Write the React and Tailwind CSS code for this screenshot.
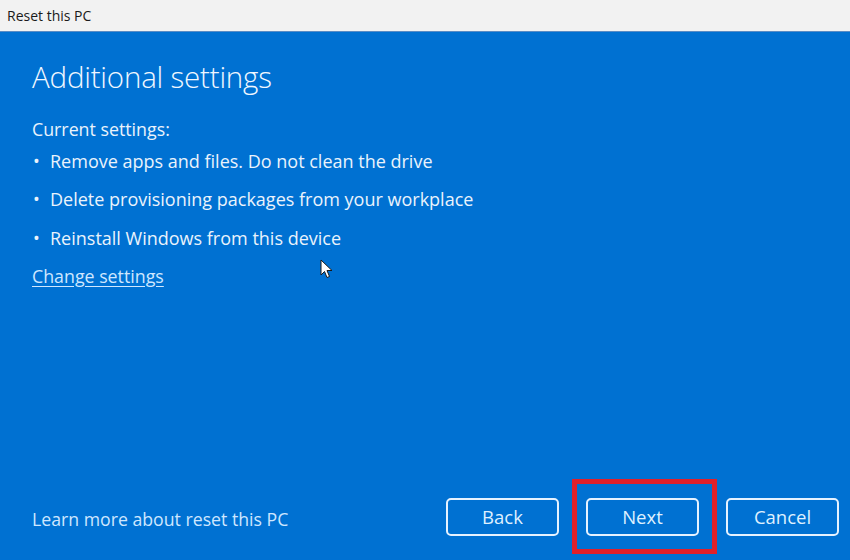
import React from "react";

export default function App() {
  const font = { fontFamily: '"Open Sans", "Noto Sans", sans-serif' };
  return (
    <div className="w-[850px] h-[560px] flex flex-col overflow-hidden" style={font}>
      <div className="h-[32px] bg-[#f2f2f2] border-b border-[#5a8cc4] flex items-center px-[7px]">
        <span className="text-[14px] text-[#1a1a1a]">Reset this PC</span>
      </div>
      <div className="relative flex-1 bg-[#0071d2] flex flex-col text-[#eaf3fc]">
        <div className="px-[32px] pt-[27px] flex flex-col">
          <h1 className="text-[29.5px] font-light leading-[36px] tracking-[-0.2px] text-[#f0f7ff]">Additional settings</h1>
          <p className="mt-[22px] text-[17.8px] leading-[24px]">Current settings:</p>
          <ul className="flex flex-col gap-[14.5px] mt-[7.5px] text-[18px] leading-[24px]">
            <li className="flex items-center">
              <span className="w-[18px] pl-[1px]">•</span>
              <span>Remove apps and files. Do not clean the drive</span>
            </li>
            <li className="flex items-center">
              <span className="w-[18px] pl-[1px]">•</span>
              <span>Delete provisioning packages from your workplace</span>
            </li>
            <li className="flex items-center">
              <span className="w-[18px] pl-[1px]">•</span>
              <span>Reinstall Windows from this device</span>
            </li>
          </ul>
          <a className="mt-[14px] text-[17.8px] leading-[24px] underline underline-offset-[3px] text-[#cfe7ff] w-fit">Change settings</a>
        </div>
        <div className="mt-auto flex items-center pl-[32px] pr-[11px] pb-[24px]">
          <span className="text-[17.7px] text-[#cfe7ff] translate-y-[2px]">Learn more about reset this PC</span>
          <div className="ml-auto flex items-center gap-[27px]">
            <button className="w-[113px] h-[38px] rounded-[5px] border-2 border-[#e6f2ff] text-[18.5px] text-[#dff0ff]">Back</button>
            <div className="relative">
              <button className="w-[113px] h-[38px] rounded-[5px] border-2 border-[#e6f2ff] text-[18.5px] text-[#dff0ff]">Next</button>
              <div className="absolute left-[-14px] right-[-18px] top-[-19px] bottom-[-18px] border-[5px] border-[#e0202a] pointer-events-none" />
            </div>
            <button className="w-[113px] h-[38px] rounded-[5px] border-2 border-[#e6f2ff] text-[18.5px] text-[#dff0ff]">Cancel</button>
          </div>
        </div>
        <svg className="absolute left-[320px] top-[227px]" width="14" height="20" viewBox="0 0 14 20">
          <path d="M1 1 L1 16 L4.5 12.5 L7 18.5 L9.5 17.5 L7 11.5 L12 11.5 Z" fill="#ffffff" stroke="#1a1a1a" strokeWidth="1" strokeLinejoin="round" />
        </svg>
      </div>
    </div>
  );
}
